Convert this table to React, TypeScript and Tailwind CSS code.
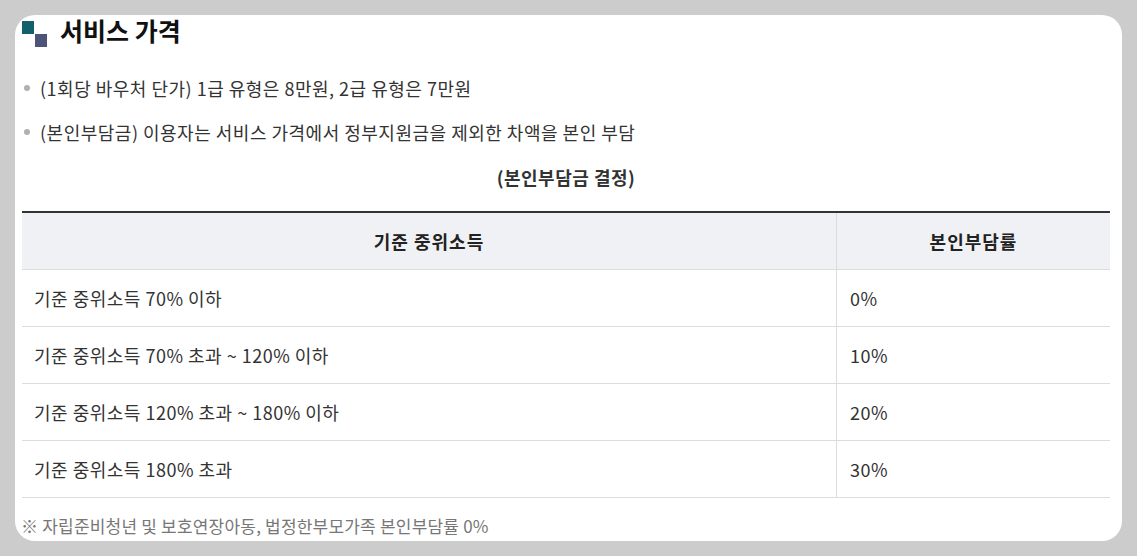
export default function App() {
  const rows = [
    { label: "기준 중위소득 70% 이하", rate: "0%" },
    { label: "기준 중위소득 70% 초과 ~ 120% 이하", rate: "10%" },
    { label: "기준 중위소득 120% 초과 ~ 180% 이하", rate: "20%" },
    { label: "기준 중위소득 180% 초과", rate: "30%" },
  ]

  return (
    <div
      className="w-[1137px] h-[556px] bg-[#cccccc] pt-[15px] pl-[15px] overflow-hidden"
      style={{ fontFamily: '"Noto Sans CJK KR", "Noto Sans", sans-serif' }}
    >
      <div className="w-[1107px] h-[526px] bg-white rounded-[20px] pl-[7px] pr-[12px] flex flex-col">
        {/* Title */}
        <div className="h-[32px] flex items-center relative">
          <div className="relative w-[26px] h-[26px] mt-[6px] shrink-0">
            <span className="absolute left-0 top-0 w-[12px] h-[13px] bg-[#11606b]"></span>
            <span className="absolute left-[13px] top-[13px] w-[12px] h-[13px] bg-[#4e5478]"></span>
          </div>
          <h2 className="ml-[12px] text-[25px] font-bold text-[#111]">서비스 가격</h2>
        </div>

        {/* Bullets */}
        <ul className="mt-[19px]">
          <li className="h-[44px] flex items-center text-[18px] tracking-[0.5px] text-[#333]">
            <span className="w-[6px] h-[6px] rounded-full bg-[#b0b0b0] ml-[2px] mr-[10px] shrink-0"></span>
            (1회당 바우처 단가) 1급 유형은 8만원, 2급 유형은 7만원
          </li>
          <li className="h-[44px] flex items-center text-[18px] tracking-[0.5px] text-[#333]">
            <span className="w-[6px] h-[6px] rounded-full bg-[#b0b0b0] ml-[2px] mr-[10px] shrink-0"></span>
            (본인부담금) 이용자는 서비스 가격에서 정부지원금을 제외한 차액을 본인 부담
          </li>
        </ul>

        <p className="h-[44px] mt-[1px] flex items-center justify-center text-[18px] tracking-[0.5px] font-bold text-[#333]">
          (본인부담금 결정)
        </p>

        {/* Table */}
        <div className="mt-[12px] w-[1088px] border-t-2 border-[#333]">
          <div className="grid grid-cols-[815px_1fr] h-[57px] bg-[#f0f1f5] border-b border-[#dcdcdc] text-[18px] tracking-[1px] font-bold text-[#222]">
            <div className="flex items-center justify-center border-r border-[#dcdcdc]">기준 중위소득</div>
            <div className="flex items-center justify-center">본인부담률</div>
          </div>
          {rows.map((row, i) => (
            <div
              key={i}
              className="grid grid-cols-[815px_1fr] h-[57px] border-b border-[#dcdcdc] text-[18px] tracking-[0.5px] text-[#333]"
            >
              <div className="flex items-center px-[12px] border-r border-[#dcdcdc]">{row.label}</div>
              <div className="flex items-center px-[13px]">{row.rate}</div>
            </div>
          ))}
        </div>

        <p className="mt-[16px] h-[24px] flex items-center text-[17px] tracking-[0.2px] text-[#777] -ml-[1px]">
          ※ 자립준비청년 및 보호연장아동, 법정한부모가족 본인부담률 0%
        </p>
      </div>
    </div>
  )
}
